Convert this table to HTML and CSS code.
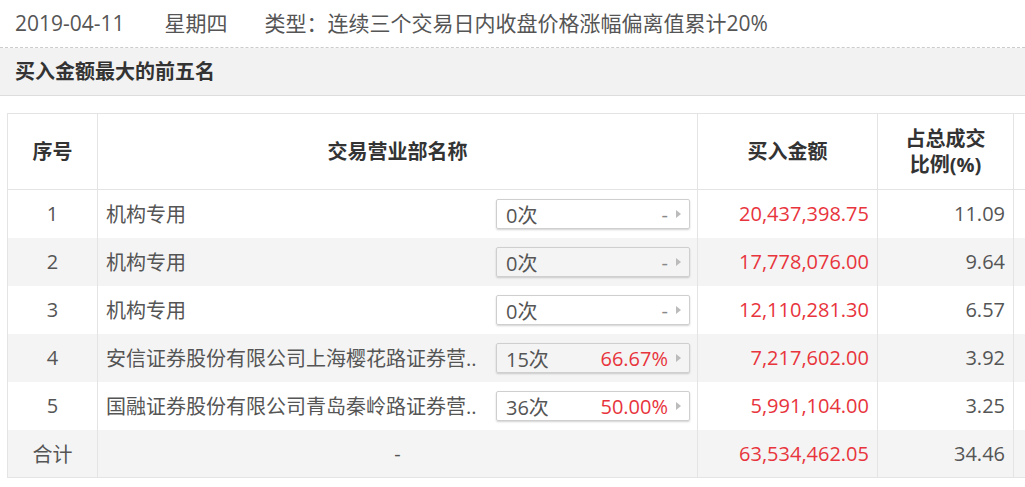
FILE: index.html
```html
<!DOCTYPE html>
<html lang="zh-CN">
<head>
<meta charset="utf-8">
<title>买入金额最大的前五名</title>
<link rel="stylesheet" href="styles.css">
</head>
<body>
<div class="page">
  <div class="info">
    <span class="info-date">2019-04-11</span>
    <span class="info-week">星期四</span>
    <span class="info-type">类型：连续三个交易日内收盘价格涨幅偏离值累计20%</span>
  </div>
  <div class="section-title">买入金额最大的前五名</div>
  <div class="table-clip">
    <table class="rank">
      <colgroup>
        <col class="c-idx">
        <col class="c-name">
        <col class="c-amt">
        <col class="c-pct">
        <col class="c-more">
      </colgroup>
      <thead>
        <tr>
          <th>序号</th>
          <th>交易营业部名称</th>
          <th>买入金额</th>
          <th>占总成交<br>比例(%)</th>
          <th></th>
        </tr>
      </thead>
      <tbody>
        <tr>
          <td class="idx">1</td>
          <td class="name"><div class="name-wrap"><span class="name-text">机构专用</span><span class="stat"><span class="cnt">0次</span><span class="rate">-</span><span class="arrow"></span></span></div></td>
          <td class="amt">20,437,398.75</td>
          <td class="pct">11.09</td>
          <td></td>
        </tr>
        <tr>
          <td class="idx">2</td>
          <td class="name"><div class="name-wrap"><span class="name-text">机构专用</span><span class="stat"><span class="cnt">0次</span><span class="rate">-</span><span class="arrow"></span></span></div></td>
          <td class="amt">17,778,076.00</td>
          <td class="pct">9.64</td>
          <td></td>
        </tr>
        <tr>
          <td class="idx">3</td>
          <td class="name"><div class="name-wrap"><span class="name-text">机构专用</span><span class="stat"><span class="cnt">0次</span><span class="rate">-</span><span class="arrow"></span></span></div></td>
          <td class="amt">12,110,281.30</td>
          <td class="pct">6.57</td>
          <td></td>
        </tr>
        <tr>
          <td class="idx">4</td>
          <td class="name"><div class="name-wrap"><span class="name-text">安信证券股份有限公司上海樱花路证券营..</span><span class="stat"><span class="cnt">15次</span><span class="rate up">66.67%</span><span class="arrow"></span></span></div></td>
          <td class="amt">7,217,602.00</td>
          <td class="pct">3.92</td>
          <td></td>
        </tr>
        <tr>
          <td class="idx">5</td>
          <td class="name"><div class="name-wrap"><span class="name-text">国融证券股份有限公司青岛秦岭路证券营..</span><span class="stat"><span class="cnt">36次</span><span class="rate up">50.00%</span><span class="arrow"></span></span></div></td>
          <td class="amt">5,991,104.00</td>
          <td class="pct">3.25</td>
          <td></td>
        </tr>
        <tr class="total">
          <td class="idx">合计</td>
          <td class="dash">-</td>
          <td class="amt">63,534,462.05</td>
          <td class="pct">34.46</td>
          <td></td>
        </tr>
      </tbody>
    </table>
  </div>
</div>
</body>
</html>
```

FILE: styles.css
```css
html, body {
  margin: 0;
  padding: 0;
  overflow: hidden;
  background: #fff;
}

body {
  width: 1025px;
  font-family: "Open Sans", "Noto Sans CJK SC", sans-serif;
  font-size: 20px;
  color: #555;
}

.page {
  width: 1025px;
  overflow: hidden;
}

.info {
  height: 47px;
  line-height: 47px;
  padding-left: 15px;
  border-bottom: 1px dashed #ccc;
  white-space: nowrap;
  display: flex;
  font-size: 21px;
}

.info-date {
  margin-right: 40px;
}

.info-week {
  margin-right: 37px;
}

.section-title {
  height: 47px;
  line-height: 47px;
  padding-left: 15px;
  background: #f2f2f2;
  border-bottom: 1px solid #ddd;
  font-weight: bold;
  color: #333;
}

.table-clip {
  margin-top: 17px;
  padding-left: 7px;
  width: 1018px;
  overflow: hidden;
}

.rank {
  border-collapse: collapse;
  table-layout: fixed;
  width: 1100px;
}

.c-idx { width: 90px; }
.c-name { width: 600px; }
.c-amt { width: 180px; }
.c-pct { width: 136px; }
.c-more { width: 94px; }

.rank th,
.rank td {
  border: 1px solid #e4e4e4;
  border-top: none;
  border-bottom: none;
  padding: 0;
  white-space: nowrap;
  overflow: hidden;
}

.rank thead tr {
  height: 76px;
  border-top: 1px solid #e4e4e4;
  border-bottom: 1px solid #e4e4e4;
}

.rank th {
  font-weight: bold;
  color: #333;
  text-align: center;
  line-height: 26px;
}

.rank tbody tr {
  height: 48px;
}

.rank tbody tr:nth-child(even) {
  background: #f4f4f4;
}

.rank tbody tr:last-child {
  border-bottom: 1px solid #e4e4e4;
}

.idx {
  text-align: center;
}

.rank td.name {
  padding: 0 7px 0 8px;
}

.name-wrap {
  display: flex;
  align-items: center;
  justify-content: space-between;
  gap: 4px;
}

.name-text {
  overflow: hidden;
}

.stat {
  flex: none;
  box-sizing: border-box;
  width: 194px;
  height: 30px;
  margin-top: 1px;
  display: flex;
  align-items: center;
  padding: 0 8px 0 9px;
  border: 1px solid #cfcfcf;
  border-radius: 2px;
  box-shadow: 0 1px 2px rgba(0, 0, 0, 0.18);
}

.cnt {
  flex: 1;
}

.rate {
  color: #888;
}

.rate.up {
  color: #e8343c;
}

.arrow {
  width: 0;
  height: 0;
  margin-left: 8px;
  border-left: 5px solid #bbb;
  border-top: 4px solid transparent;
  border-bottom: 4px solid transparent;
}

.rank td.amt {
  text-align: right;
  padding-right: 8px;
  color: #e8343c;
}

.rank td.pct {
  text-align: right;
  padding-right: 8px;
}

.dash {
  text-align: center;
}
```
